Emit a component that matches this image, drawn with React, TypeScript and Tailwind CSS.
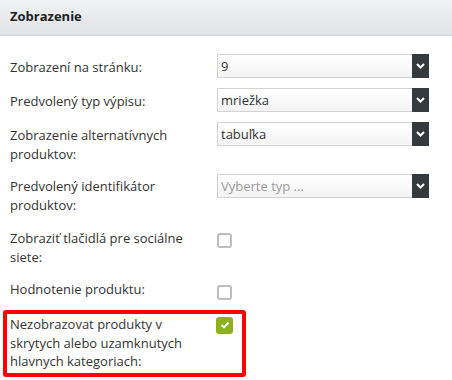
import React from 'react';

const font = { fontFamily: '"Open Sans", "Liberation Sans", sans-serif' };

const Chevron = () => (
  <svg width="9" height="6" viewBox="0 0 9 6" className="block">
    <path d="M1 1 L4.5 4.5 L8 1" fill="none" stroke="#ffffff" strokeWidth="2" />
  </svg>
);

interface SelectProps {
  value: string;
  placeholder?: boolean;
}

const Select: React.FC<SelectProps> = ({ value, placeholder }) => (
  <div className="flex h-[24px] w-[212px] shrink-0 border border-[#d3d3d3] bg-gradient-to-b from-white to-[#f3f3f3]">
    <div
      className={`flex-1 pl-[3px] text-[13px] leading-[22px] ${placeholder ? 'text-[#9a9a9a]' : 'text-[#333]'}`}
    >
      {value}
    </div>
    <div className="-my-px -mr-px flex w-[17px] items-center justify-center bg-[#343a3d]">
      <Chevron />
    </div>
  </div>
);

const Checkbox: React.FC<{ checked?: boolean }> = ({ checked }) =>
  checked ? (
    <div className="mt-[3px] flex h-[17px] w-[17px] items-center justify-center rounded-[3px] bg-[#8db21f]">
      <svg width="10" height="8" viewBox="0 0 10 8">
        <path d="M1.5 4 L4 6.3 L8.5 1.5" fill="none" stroke="#ffffff" strokeWidth="2" />
      </svg>
    </div>
  ) : (
    <div className="mt-[8px] h-[15px] w-[15px] rounded-[3px] border-2 border-[#bdbdbd] bg-white" />
  );

interface RowProps {
  label: React.ReactNode;
  children: React.ReactNode;
}

const Row: React.FC<RowProps> = ({ label, children }) => (
  <div className="mb-[10px] flex gap-[10px]">
    <div className="w-[196px] shrink-0 pt-[3.5px] text-[13px] leading-[19px] text-[#333]">{label}</div>
    <div className="pl-[1px]">{children}</div>
  </div>
);

export default function App() {
  return (
    <div className="h-[380px] w-[452px] overflow-hidden bg-white" style={font}>
      <div className="flex h-[36px] items-center border-b border-[#d2d4d6] bg-gradient-to-b from-[#f0f1f2] to-[#e1e3e5] px-[10px] pb-px">
        <span className="text-[13px] font-bold text-[#222]">Zobrazenie</span>
      </div>

      <div className="px-[10px] pt-[18px]">
        <Row label="Zobrazení na stránku:">
          <Select value="9" />
        </Row>
        <Row label="Predvolený typ výpisu:">
          <Select value="mriežka" />
        </Row>
        <Row label="Zobrazenie alternatívnych produktov:">
          <Select value="tabuľka" />
        </Row>
        <Row label="Predvolený identifikátor produktov:">
          <Select value="Vyberte typ ..." placeholder />
        </Row>
        <Row label="Zobraziť tlačidlá pre sociálne siete:">
          <Checkbox />
        </Row>
        <Row label="Hodnotenie produktu:">
          <Checkbox />
        </Row>

        <div className="-ml-[7px] w-[243px] rounded-[3px] border-4 border-[#ff0000] pb-[2px] pl-[3px]">
          <div className="flex gap-[10px]">
            <div className="w-[196px] shrink-0 pt-[1.5px] text-[13px] leading-[18.5px] text-[#333]">
              Nezobrazovat produkty v skrytych alebo uzamknutych hlavnych kategoriach:
            </div>
            <Checkbox checked />
          </div>
        </div>
      </div>
    </div>
  );
}
